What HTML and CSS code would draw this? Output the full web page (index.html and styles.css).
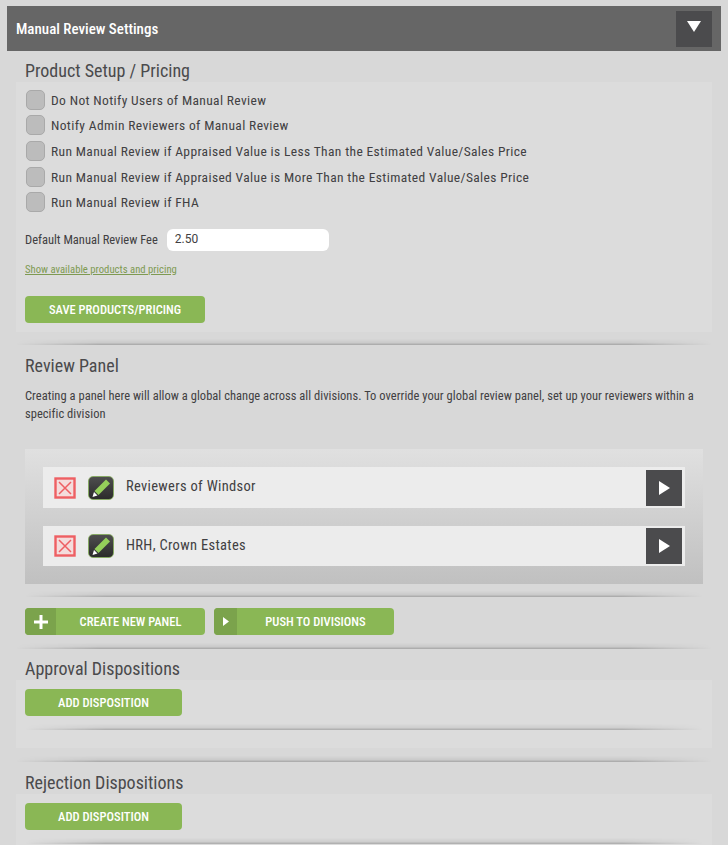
FILE: index.html
```html
<!DOCTYPE html>
<html lang="en">
<head>
<meta charset="utf-8">
<title>Manual Review Settings</title>
<link rel="stylesheet" href="styles.css">
</head>
<body>
<div class="page">
  <header class="bar">
    <span class="bar-title">Manual Review Settings</span>
    <button class="square-btn square-btn-down" aria-label="Collapse"><svg width="14" height="11" viewBox="0 0 14 11"><path d="M0 0H14L7 11Z" fill="#fff"/></svg></button>
  </header>

  <section class="setup">
    <h2 class="heading heading-first">Product Setup / Pricing</h2>
    <div class="block block-setup">
      <label class="check"><span class="box"></span>Do Not Notify Users of Manual Review</label>
      <label class="check"><span class="box"></span>Notify Admin Reviewers of Manual Review</label>
      <label class="check"><span class="box"></span>Run Manual Review if Appraised Value is Less Than the Estimated Value/Sales Price</label>
      <label class="check"><span class="box"></span>Run Manual Review if Appraised Value is More Than the Estimated Value/Sales Price</label>
      <label class="check"><span class="box"></span>Run Manual Review if FHA</label>
      <div class="fee">
        <span class="fee-label">Default Manual Review Fee</span>
        <input class="fee-input" type="text" value="2.50">
      </div>
      <a class="link" href="#">Show available products and pricing</a>
      <button class="btn btn-save">SAVE PRODUCTS/PRICING</button>
    </div>
  </section>

  <div class="divider divider-1"></div>

  <section class="review">
    <h2 class="heading heading-review">Review Panel</h2>
    <p class="intro">Creating a panel here will allow a global change across all divisions. To override your global review panel, set up your reviewers within a specific division</p>
    <div class="panel">
      <div class="panel-row">
        <span class="del"><svg width="22" height="22" viewBox="0 0 22 22"><rect x="1.5" y="1.5" width="19" height="19" fill="#f4dcdc" stroke="#ee5f63" stroke-width="2.4"/><path d="M5 5L17 17M17 5L5 17" stroke="#ee5f63" stroke-width="1.5"/></svg></span>
        <span class="edit"><svg width="24" height="22" viewBox="0 0 24 22"><path d="M17 2.5L21 6.5L9.5 18L5.5 14Z" fill="#95d05a"/><path d="M5 15L8.5 18.5L3.5 20Z" fill="#fff"/></svg></span>
        <span class="panel-name">Reviewers of Windsor</span>
        <button class="square-btn" aria-label="Open"><svg width="11" height="14" viewBox="0 0 11 14"><path d="M0 0L11 7L0 14Z" fill="#fff"/></svg></button>
      </div>
      <div class="panel-row">
        <span class="del"><svg width="22" height="22" viewBox="0 0 22 22"><rect x="1.5" y="1.5" width="19" height="19" fill="#f4dcdc" stroke="#ee5f63" stroke-width="2.4"/><path d="M5 5L17 17M17 5L5 17" stroke="#ee5f63" stroke-width="1.5"/></svg></span>
        <span class="edit"><svg width="24" height="22" viewBox="0 0 24 22"><path d="M17 2.5L21 6.5L9.5 18L5.5 14Z" fill="#95d05a"/><path d="M5 15L8.5 18.5L3.5 20Z" fill="#fff"/></svg></span>
        <span class="panel-name">HRH, Crown Estates</span>
        <button class="square-btn" aria-label="Open"><svg width="11" height="14" viewBox="0 0 11 14"><path d="M0 0L11 7L0 14Z" fill="#fff"/></svg></button>
      </div>
    </div>
    <div class="divider divider-2"></div>
    <div class="actions">
      <button class="btn btn-icon"><span class="btn-tab btn-tab-wide"><svg width="14" height="14" viewBox="0 0 14 14"><path d="M5.5 0H8.5V5.5H14V8.5H8.5V14H5.5V8.5H0V5.5H5.5Z" fill="#fff"/></svg></span><span class="btn-text">CREATE NEW PANEL</span></button>
      <button class="btn btn-icon"><span class="btn-tab"><svg width="6" height="9" viewBox="0 0 6 9"><path d="M0 0L6 4.5L0 9Z" fill="#fff"/></svg></span><span class="btn-text">PUSH TO DIVISIONS</span></button>
    </div>
    <div class="divider divider-3"></div>
  </section>

  <section>
    <h2 class="heading heading-disp">Approval Dispositions</h2>
    <div class="block block-disp">
      <button class="btn btn-add">ADD DISPOSITION</button>
      <div class="divider divider-inner"></div>
    </div>
  </section>

  <div class="divider divider-4"></div>

  <section>
    <h2 class="heading heading-disp heading-rej">Rejection Dispositions</h2>
    <div class="block block-disp block-last">
      <button class="btn btn-add">ADD DISPOSITION</button>
      <div class="divider divider-inner"></div>
    </div>
  </section>
</div>
</body>
</html>
```

FILE: styles.css
```css
* { box-sizing: border-box; }
html, body { margin: 0; padding: 0; }
body {
  background: #d8d8d8;
  font-family: Roboto, "Liberation Sans", sans-serif;
  font-stretch: 75%;
  color: #414042;
}
.page { padding-top: 6px; }
.bar {
  margin: 0 7px;
  height: 45px;
  background: #666;
  display: flex;
  align-items: center;
  justify-content: space-between;
  padding: 0 9px 0 9px;
}
.bar-title { color: #fff; font-size: 15px; font-weight: 500; }
.square-btn {
  width: 36px;
  height: 36px;
  border: 0;
  padding: 0;
  background: #4b4b4d;
  display: flex;
  align-items: center;
  justify-content: center;
  flex: none;
}
.square-btn-down svg { margin-top: -4px; }
.heading { margin: 0; font-size: 18px; font-weight: 400; color: #4a4a4c; line-height: 22px; padding-left: 25px; }
.heading-first { padding-top: 9px; height: 31px; }
.heading-review { padding-top: 10px; height: 32px; }
.heading-disp { height: 31px; padding-top: 9px; }
.heading-rej { height: 32px; padding-top: 10px; }
.block { margin: 0 16px; background: #dcdcdc; padding: 0 9px; }
.block-setup { height: 250px; padding-top: 5px; }
.check { display: flex; align-items: center; gap: 6px; height: 25.6px; font-size: 13.5px; letter-spacing: 0.36px; padding-left: 1px; }
.box {
  width: 19px;
  height: 20px;
  border-radius: 5px;
  background: #bcbcbc;
  border: 1px solid #a9a9a9;
  flex: none;
}
.fee { display: flex; align-items: center; gap: 9px; margin-top: 14px; font-size: 12.5px; }
.fee-input {
  width: 162px;
  height: 22px;
  border: 0;
  border-radius: 6px;
  background: #fff;
  padding: 0 8px 2px;
  font-family: Roboto, sans-serif;
  font-stretch: 100%;
  font-size: 12px;
  color: #414042;
}
.link { display: block; margin-top: 12px; font-size: 10.7px; line-height: 14px; color: #7e9a52; }
.btn {
  display: block;
  border: 0;
  border-radius: 4px;
  background: #8ab755;
  color: #fff;
  height: 27px;
  padding: 0;
  font-family: inherit;
  font-stretch: inherit;
  font-size: 12.5px;
  font-weight: 500;
}
.btn-save { width: 180px; margin-top: 19px; }
.divider {
  height: 8px;
  background: linear-gradient(to bottom, rgba(0,0,0,0) 20%, rgba(0,0,0,.06) 70%, rgba(0,0,0,.23));
  -webkit-mask-image: linear-gradient(to right, transparent, #000 12%, #000 88%, transparent);
  mask-image: linear-gradient(to right, transparent, #000 12%, #000 88%, transparent);
}
.divider-1 { margin: 5px 16px 0; }
.intro { margin: 10px 0 0; padding: 0 25px; font-size: 12.5px; line-height: 18px; letter-spacing: 0.03px; }
.panel {
  margin: 26px 25px 0;
  height: 135px;
  padding: 18px 18px 0;
  display: flex;
  flex-direction: column;
  gap: 18px;
  background: linear-gradient(to bottom, #e0e0e0, #c0c0c0);
}
.panel-row {
  height: 41px;
  background: #ececec;
  display: flex;
  align-items: center;
  padding: 0 3px 0 11px;
}
.panel-row:last-child { height: 40px; }
.del { display: flex; flex: none; width: 34px; }
.edit {
  width: 26px;
  height: 24px;
  flex: none;
  border-radius: 5px;
  border: 1px solid #86a863;
  background: linear-gradient(to bottom, #4e4e4e, #2b2b2b);
  display: flex;
  align-items: center;
  justify-content: center;
  overflow: hidden;
}
.panel-name { flex: 1; margin-left: 12px; padding-bottom: 2px; font-size: 14.5px; letter-spacing: 0.32px; }
.divider-2 { margin: 5px 25px 0; }
.actions { display: flex; gap: 9px; margin: 11px 25px 0; }
.btn-icon { width: 180px; display: flex; overflow: hidden; }
.btn-tab { width: 23px; background: #7ba34c; display: flex; align-items: center; justify-content: center; flex: none; }
.btn-tab-wide { width: 31px; }
.btn-text { flex: 1; display: flex; align-items: center; justify-content: center; }
.divider-3 { margin: 6px 16px 0; }
.block-disp { height: 68px; padding-top: 9px; }
.btn-add { width: 157px; }
.block .divider-inner { margin: 6px 0 0; }
.divider-4 { margin: 6px 16px 0; }
.block-disp.block-last { height: 51px; }
```
